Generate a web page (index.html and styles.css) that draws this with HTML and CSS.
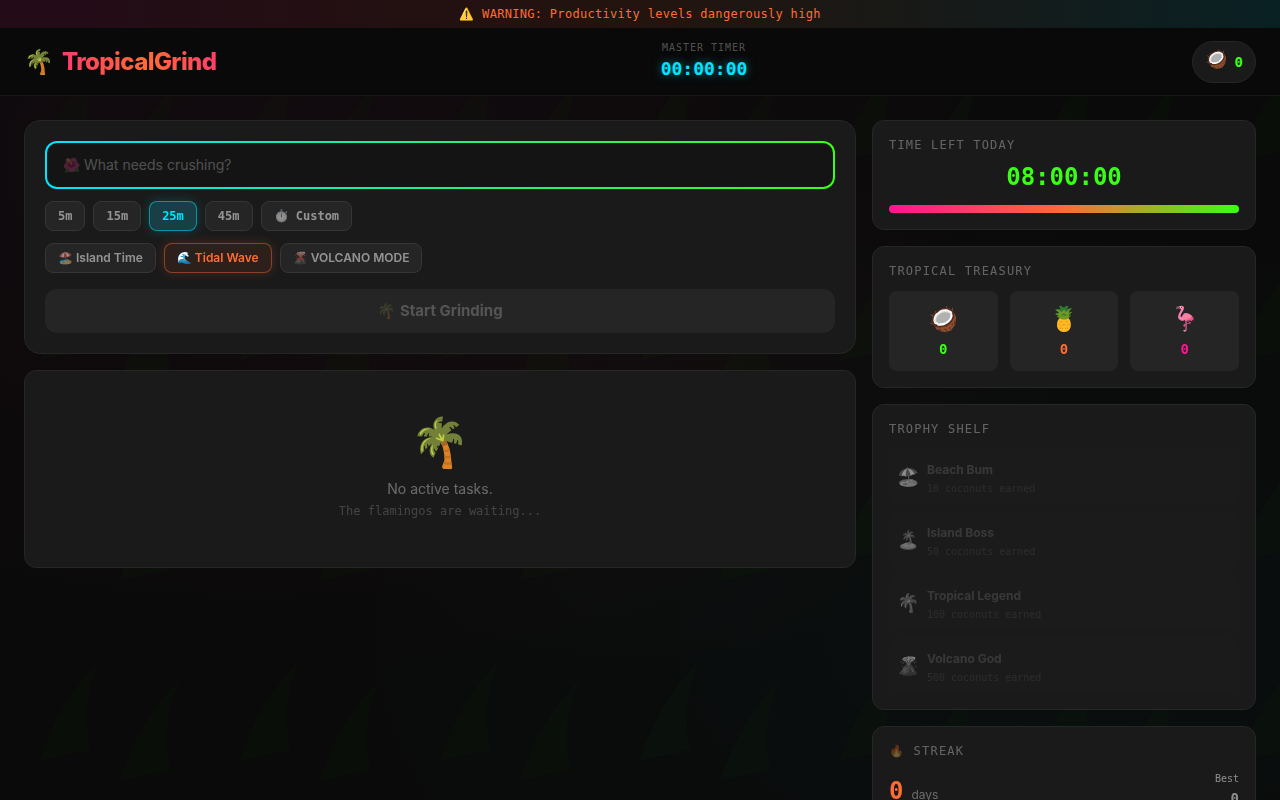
FILE: index.html
```html
<!DOCTYPE html>
<html lang="en">
<head>
  <meta charset="UTF-8" />
  <meta name="viewport" content="width=device-width, initial-scale=1.0" />
  <title>TropicalGrind</title>
  <link rel="stylesheet" href="styles.css">
</head>
<body>

  <!-- Leaf pattern behind everything -->
  <svg class="leaves" aria-hidden="true">
    <defs>
      <pattern id="leaf" width="200" height="200" patternUnits="userSpaceOnUse">
        <path d="M40 160 Q60 100 100 60 Q80 100 90 150 Z" />
        <path d="M120 180 Q140 120 180 80 Q160 120 170 170 Z" />
      </pattern>
    </defs>
    <rect width="100%" height="100%" fill="url(#leaf)" />
  </svg>

  <div class="banner">⚠️ WARNING: Productivity levels dangerously high</div>

  <header class="header">
    <div class="brand">
      <span class="brand-icon">🌴</span>
      <h1 class="brand-name">TropicalGrind</h1>
    </div>
    <div class="master">
      <div class="master-label">MASTER TIMER</div>
      <div class="master-time">00:00:00</div>
    </div>
    <div class="wallet">
      <span class="wallet-icon">🥥</span>
      <span class="wallet-count">0</span>
    </div>
  </header>

  <main class="layout">
    <div class="column">
      <!-- New task form -->
      <form class="card task-form">
        <input class="task-input" type="text" aria-label="Task" placeholder="🌺 What needs crushing?">
        <div class="chips">
          <button type="button" class="chip mono">5m</button>
          <button type="button" class="chip mono">15m</button>
          <button type="button" class="chip mono chip-time">25m</button>
          <button type="button" class="chip mono">45m</button>
          <button type="button" class="chip mono">⏱️ Custom</button>
        </div>
        <div class="chips">
          <button type="button" class="chip">🏖️ Island Time</button>
          <button type="button" class="chip chip-mode">🌊 Tidal Wave</button>
          <button type="button" class="chip">🌋 VOLCANO MODE</button>
        </div>
        <button type="submit" class="start" disabled>🌴 Start Grinding</button>
      </form>

      <section class="card empty">
        <div class="empty-icon">🌴</div>
        <p class="empty-title">No active tasks.</p>
        <p class="empty-sub">The flamingos are waiting...</p>
      </section>
    </div>

    <aside class="column">
      <section class="card panel">
        <h2 class="panel-title">TIME LEFT TODAY</h2>
        <div class="time-left">08:00:00</div>
        <div class="bar"></div>
      </section>

      <section class="card panel">
        <h2 class="panel-title">TROPICAL TREASURY</h2>
        <div class="treasury">
          <div class="coin lime"><span class="coin-icon">🥥</span>0</div>
          <div class="coin orange"><span class="coin-icon">🍍</span>0</div>
          <div class="coin pink"><span class="coin-icon">🦩</span>0</div>
        </div>
      </section>

      <section class="card panel">
        <h2 class="panel-title">TROPHY SHELF</h2>
        <ul class="trophies">
          <li class="trophy">
            <span class="trophy-icon">🏖️</span>
            <div>
              <div class="trophy-name">Beach Bum</div>
              <div class="trophy-goal">10 coconuts earned</div>
            </div>
          </li>
          <li class="trophy">
            <span class="trophy-icon">🏝️</span>
            <div>
              <div class="trophy-name">Island Boss</div>
              <div class="trophy-goal">50 coconuts earned</div>
            </div>
          </li>
          <li class="trophy">
            <span class="trophy-icon">🌴</span>
            <div>
              <div class="trophy-name">Tropical Legend</div>
              <div class="trophy-goal">100 coconuts earned</div>
            </div>
          </li>
          <li class="trophy">
            <span class="trophy-icon">🌋</span>
            <div>
              <div class="trophy-name">Volcano God</div>
              <div class="trophy-goal">500 coconuts earned</div>
            </div>
          </li>
        </ul>
      </section>

      <section class="card panel">
        <h2 class="panel-title">🔥 STREAK</h2>
        <div class="streak">
          <div class="streak-now"><span class="streak-count">0</span><span class="streak-unit">days</span></div>
          <div class="streak-best">
            <div class="best-label">Best</div>
            <div class="best-count">0</div>
          </div>
        </div>
      </section>
    </aside>
  </main>

</body>
</html>
```
FILE: styles.css
```css
* { box-sizing: border-box; }

:root {
  --pink: #ff1493;
  --orange: #ff6b35;
  --cyan: #00e5ff;
  --lime: #39ff14;
  --mono: "DejaVu Sans Mono", "Liberation Mono", monospace;
}

body {
  margin: 0;
  min-height: 100vh;
  font-family: Inter, "Liberation Sans", sans-serif;
  font-size: 14px;
  line-height: 20px;
  color: #fff;
  background:
    radial-gradient(ellipse at 20% 20%, rgba(255, 20, 147, 0.03), transparent 60%),
    radial-gradient(ellipse at 80% 80%, rgba(0, 229, 255, 0.02), transparent 50%),
    radial-gradient(ellipse at 50% 50%, rgba(255, 107, 53, 0.02), transparent 50%),
    #0a0a0a;
  background-attachment: fixed;
}

h1, h2, p, ul { margin: 0; padding: 0; }

input, button { font-family: inherit; }

.leaves {
  position: fixed;
  inset: 0;
  z-index: -1;
  width: 100%;
  height: 100%;
  fill: var(--lime);
}
.leaves path { opacity: 0.018; }

/* Top banner */
.banner {
  padding: 6px 24px;
  text-align: center;
  font-family: var(--mono);
  font-size: 12px;
  line-height: 16px;
  letter-spacing: 0.025em;
  color: var(--orange);
  background: linear-gradient(90deg, rgba(255, 20, 147, 0.1), rgba(255, 107, 53, 0.1), rgba(0, 229, 255, 0.1)), #0a0a0a;
}

/* Header */
.header {
  display: flex;
  align-items: center;
  justify-content: space-between;
  padding: 12px 24px;
  border-bottom: 1px solid #171717;
  background: #090909;
}

.brand {
  display: flex;
  align-items: center;
  gap: 8px;
}
.brand-icon {
  font-size: 24px;
  line-height: 32px;
}
.brand-name {
  font-size: 24px;
  line-height: 32px;
  font-weight: 800;
  letter-spacing: -0.025em;
  background: linear-gradient(90deg, #ff3b6c, var(--orange) 55%, #ff3f68);
  -webkit-background-clip: text;
  background-clip: text;
  color: transparent;
}

.master {
  text-align: center;
  font-family: var(--mono);
}
.master-label {
  font-size: 10px;
  line-height: 15px;
  letter-spacing: 0.1em;
  color: rgba(255, 255, 255, 0.3);
}
.master-time {
  font-size: 18px;
  line-height: 28px;
  font-weight: 700;
  color: var(--cyan);
  text-shadow: 0 0 10px rgba(0, 229, 255, 0.5);
}

.wallet {
  display: flex;
  align-items: center;
  gap: 8px;
  padding: 6px 12px;
  border: 1px solid #262626;
  border-radius: 21px;
  background: #1a1a1a;
}
.wallet-icon {
  padding-bottom: 6px;
  font-size: 18px;
  line-height: 22px;
}
.wallet-count {
  font-family: var(--mono);
  font-weight: 700;
  color: var(--lime);
}

/* Page columns */
.layout {
  display: grid;
  grid-template-columns: minmax(0, 1fr) 384px;
  align-items: start;
  gap: 16px;
  padding: 24px;
}
.column {
  display: flex;
  flex-direction: column;
  gap: 16px;
}

.card {
  border: 1px solid #262626;
  border-radius: 12px;
  background: #1a1a1a;
}

/* Task form */
.task-form {
  display: flex;
  flex-direction: column;
  gap: 12px;
  padding: 20px;
  border-radius: 16px;
}
.task-input {
  width: 100%;
  height: 48px;
  padding: 0 16px 2px;
  border: 2px solid transparent;
  border-radius: 12px;
  background:
    linear-gradient(#141414, #141414) padding-box,
    linear-gradient(90deg, var(--cyan), var(--lime)) border-box;
  color: #fff;
  font-size: 14px;
  outline: none;
}
.task-input::placeholder { color: rgba(255, 255, 255, 0.27); }

.chips {
  display: flex;
  flex-wrap: wrap;
  gap: 8px;
}
.chip {
  padding: 6px 12px;
  border: 1px solid #363636;
  border-radius: 8px;
  background: #252525;
  color: rgba(255, 255, 255, 0.5);
  font-size: 12px;
  line-height: 16px;
  font-weight: 600;
  cursor: pointer;
}
.mono { font-family: var(--mono); }
.chip-time {
  border-color: rgba(0, 229, 255, 0.5);
  background: #173f45;
  color: var(--cyan);
  box-shadow: 0 0 12px rgba(0, 229, 255, 0.2);
}
.chip-mode {
  border-color: rgba(255, 107, 53, 0.45);
  background: #2d1f1a;
  color: var(--orange);
  box-shadow: 0 0 12px rgba(255, 107, 53, 0.2);
}

.start {
  margin-top: 4px;
  padding: 12px;
  border: none;
  border-radius: 12px;
  background: #252525;
  color: rgba(255, 255, 255, 0.22);
  font-size: 15px;
  line-height: 20px;
  font-weight: 700;
}

/* Empty state */
.empty {
  padding: 40px 20px;
  text-align: center;
}
.empty-icon {
  margin-bottom: 4px;
  font-size: 48px;
  line-height: 62px;
}
.empty-title {
  line-height: 24px;
  color: rgba(255, 255, 255, 0.35);
}
.empty-sub {
  padding-bottom: 6px;
  font-family: var(--mono);
  font-size: 12px;
  color: rgba(255, 255, 255, 0.18);
}

/* Sidebar panels */
.panel { padding: 16px; }
.panel-title {
  margin-bottom: 12px;
  font-family: var(--mono);
  font-size: 12px;
  line-height: 16px;
  font-weight: 400;
  letter-spacing: 0.1em;
  color: rgba(255, 255, 255, 0.32);
}

.time-left {
  margin-bottom: 16px;
  text-align: center;
  font-family: var(--mono);
  font-size: 24px;
  line-height: 24px;
  font-weight: 700;
  color: var(--lime);
}
.bar {
  height: 8px;
  border-radius: 4px;
  background: linear-gradient(90deg, var(--pink), var(--orange), var(--lime));
}

.treasury {
  display: grid;
  grid-template-columns: repeat(3, 1fr);
  gap: 12px;
}
.coin {
  display: flex;
  flex-direction: column;
  align-items: center;
  gap: 4px;
  padding: 12px;
  border-radius: 8px;
  background: #252525;
  font-family: var(--mono);
  font-weight: 700;
}
.coin-icon {
  font-size: 24px;
  line-height: 32px;
}
.lime { color: var(--lime); }
.orange { color: var(--orange); }
.pink { color: var(--pink); }

.trophies {
  display: flex;
  flex-direction: column;
  gap: 8px;
  list-style: none;
}
.trophy {
  display: flex;
  align-items: center;
  gap: 8px;
  padding: 8px;
  border-radius: 8px;
  background: #1b1b1b;
}
.trophy-icon {
  font-size: 18px;
  line-height: 28px;
  filter: grayscale(1);
  opacity: 0.5;
}
.trophy-name {
  padding-top: 2px;
  font-size: 12px;
  line-height: 22px;
  font-weight: 700;
  color: rgba(255, 255, 255, 0.13);
}
.trophy-goal {
  font-family: var(--mono);
  font-size: 10px;
  line-height: 15px;
  color: rgba(255, 255, 255, 0.08);
}

.streak {
  display: flex;
  align-items: center;
  justify-content: space-between;
}
.streak-now {
  display: flex;
  align-items: baseline;
  gap: 8px;
}
.streak-count {
  font-family: var(--mono);
  font-size: 24px;
  line-height: 32px;
  font-weight: 700;
  color: var(--orange);
}
.streak-unit {
  font-size: 12px;
  color: rgba(255, 255, 255, 0.35);
}
.streak-best {
  text-align: right;
  font-family: var(--mono);
  color: rgba(255, 255, 255, 0.5);
}
.best-label {
  font-size: 10px;
  line-height: 15px;
}
.best-count {
  line-height: 24px;
  font-weight: 700;
}
```
